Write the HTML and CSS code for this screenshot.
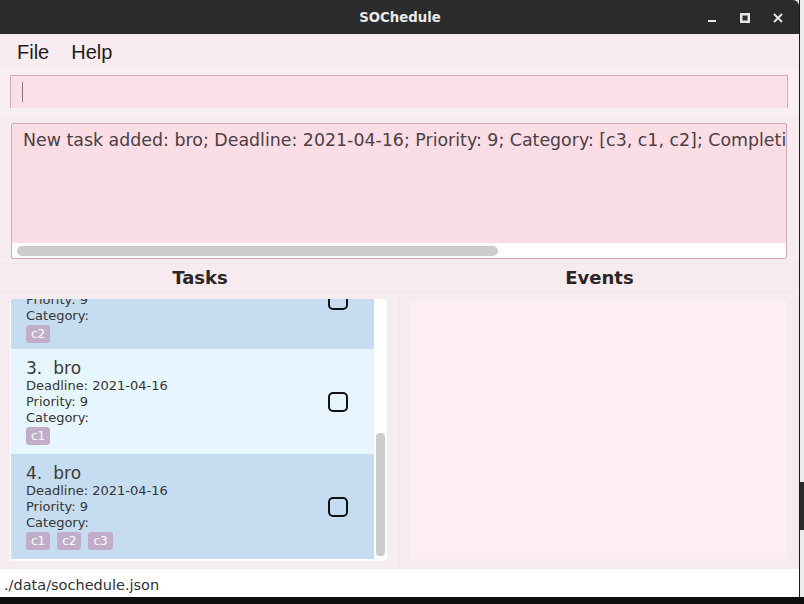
FILE: index.html
```html
<!DOCTYPE html>
<html>
<head>
<meta charset="utf-8">
<link rel="stylesheet" href="styles.css">
</head>
<body>
<div class="desk">
  <div class="window">
    <div class="titlebar">
      <div></div>
      <div class="title">SOChedule</div>
      <div class="winbtns">
        <svg width="12" height="12" viewBox="0 0 12 12"><rect x="2" y="8" width="8" height="2" fill="#e6e6e6"/></svg>
        <svg width="12" height="12" viewBox="0 0 12 12"><rect x="2.25" y="2.25" width="7.5" height="7.5" fill="none" stroke="#e6e6e6" stroke-width="2.5"/></svg>
        <svg width="12" height="12" viewBox="0 0 12 12"><path d="M2 2 L10 10 M10 2 L2 10" stroke="#e6e6e6" stroke-width="2"/></svg>
      </div>
    </div>
    <div class="menubar">
      <span>File</span>
      <span>Help</span>
    </div>
    <div class="cmd-area">
      <div class="cmd"><span class="caret"></span></div>
    </div>
    <div class="result-area">
      <div class="result">
        <div class="result-text">New task added: bro; Deadline: 2021-04-16; Priority: 9; Category: [c3, c1, c2]; Completion Status: Incomplete</div>
        <div class="hscroll"><div class="hthumb"></div></div>
      </div>
    </div>
    <div class="headers">
      <div class="hdr">Tasks</div>
      <div class="hdr">Events</div>
    </div>
    <div class="lists">
      <div class="col col-left">
        <div class="tasklist">
          <div class="cards">
            <div class="cards-inner">
              <div class="card dark first">
                <div class="info">
                  <div class="name"><span>2.</span><span class="nm">bro</span></div>
                  <div class="line">Deadline: 2021-04-16</div>
                  <div class="line">Priority: 9</div>
                  <div class="line">Category:</div>
                  <div class="tags"><span class="tag">c2</span></div>
                </div>
                <div class="check"></div>
              </div>
              <div class="card light">
                <div class="info">
                  <div class="name"><span>3.</span><span class="nm">bro</span></div>
                  <div class="line">Deadline: 2021-04-16</div>
                  <div class="line">Priority: 9</div>
                  <div class="line">Category:</div>
                  <div class="tags"><span class="tag">c1</span></div>
                </div>
                <div class="check"></div>
              </div>
              <div class="card dark">
                <div class="info">
                  <div class="name"><span>4.</span><span class="nm">bro</span></div>
                  <div class="line">Deadline: 2021-04-16</div>
                  <div class="line">Priority: 9</div>
                  <div class="line">Category:</div>
                  <div class="tags"><span class="tag">c1</span><span class="tag">c2</span><span class="tag">c3</span></div>
                </div>
                <div class="check"></div>
              </div>
            </div>
          </div>
          <div class="vscroll"><div class="vthumb"></div></div>
        </div>
      </div>
      <div class="col col-right">
        <div class="eventlist"></div>
      </div>
    </div>
    <div class="status">./data/sochedule.json</div>
  </div>
  <div class="taskbar"></div>
</div>
</body>
</html>
```
FILE: styles.css
```css
html, body {
  margin: 0;
  padding: 0;
}
body {
  width: 804px;
  height: 604px;
  overflow: hidden;
  background: linear-gradient(to bottom, #ececec 0, #ececec 482px, #2a2a2a 482px, #2a2a2a 530px, #ececec 530px);
  font-family: "DejaVu Sans", sans-serif;
}
.desk {
  display: flex;
  flex-direction: column;
  width: 804px;
  height: 604px;
}
.window {
  width: 799px;
  height: 597px;
  background: #f7ecf0;
  border-right: 1px solid #1c1c1c;
  display: flex;
  flex-direction: column;
}
.taskbar {
  height: 7px;
  background: #0e0e0e;
}
.titlebar {
  height: 34px;
  flex: none;
  background: #2b2b2b;
  display: grid;
  grid-template-columns: 1fr auto 1fr;
  align-items: center;
  border-top-right-radius: 6px;
}
.title {
  color: #e9e9e9;
  font-family: "DejaVu Sans", sans-serif;
  font-weight: bold;
  font-size: 13.3px;
  padding-left: 1px;
}
.winbtns {
  display: flex;
  justify-content: flex-end;
  gap: 21px;
  padding-right: 15px;
  padding-top: 1px;
}
.winbtns svg {
  display: block;
}
.menubar {
  height: 34px;
  box-sizing: border-box;
  padding-top: 3px;
  flex: none;
  background: #f9ecf0;
  display: flex;
  align-items: center;
  gap: 22px;
  padding-left: 17px;
  font-family: "Liberation Sans", sans-serif;
  font-size: 20px;
  color: #1e1e1e;
}
.cmd-area {
  padding: 7px 11px 7px 10px;
  background: #f9eef2;
  flex: none;
}
.cmd {
  height: 34px;
  box-sizing: border-box;
  background: #fcdee7;
  border: 1px solid #d4acb8;
  border-bottom-color: #fbf4f6;
  display: flex;
  align-items: center;
  padding-left: 11px;
}
.caret {
  width: 1px;
  height: 20px;
  background: #8a7a80;
}
.result-area {
  padding: 7px 12px 4px 11px;
  flex: none;
}
.result {
  height: 136px;
  box-sizing: border-box;
  background: #fbdde6;
  border: 1px solid #d3a9b5;
  border-radius: 2px;
  display: flex;
  flex-direction: column;
  overflow: hidden;
}
.result-text {
  flex: 1;
  padding: 6px 0 0 11px;
  font-size: 17.4px;
  line-height: 20px;
  color: #4a4044;
  white-space: nowrap;
  overflow: hidden;
}
.hscroll {
  height: 15px;
  background: #ffffff;
  display: flex;
  align-items: center;
  padding-left: 5px;
}
.hthumb {
  width: 481px;
  height: 10px;
  background: #cccccc;
  border-radius: 5px;
}
.headers {
  height: 28px;
  flex: none;
  display: grid;
  grid-template-columns: 400px 399px;
  background: #f8ebef;
  border-top: 1px solid #f5e6ea;
  box-sizing: border-box;
}
.hdr {
  display: flex;
  align-items: center;
  justify-content: center;
  font-weight: bold;
  font-size: 18px;
  color: #2c2426;
}
.lists {
  flex: 1;
  display: grid;
  grid-template-columns: 400px 399px;
  min-height: 0;
  border-top: 1px solid #f3e6ea;
}
.col {
  background: #f6ecef;
  display: flex;
  min-height: 0;
}
.col-left {
  padding: 7px 12px 8px 10px;
  border-right: 1px solid #f2e4e8;
}
.col-right {
  padding: 8px 12px 10px 10px;
}
.tasklist {
  flex: 1;
  background: #ffffff;
  display: flex;
  overflow: hidden;
}
.cards {
  width: 363px;
  margin-left: 1px;
  overflow: hidden;
}
.cards-inner {
  margin-top: -55px;
}
.card {
  height: 105px;
  box-sizing: border-box;
  display: flex;
  align-items: center;
  padding: 9px 26px 9px 15px;
  color: #353535;
}
.card.first {
  padding-top: 12px;
  padding-bottom: 6px;
}
.card.dark {
  background: #c6dcf0;
}
.card.light {
  background: #e7f5fe;
}
.info {
  flex: 1;
  align-self: flex-start;
}
.name {
  font-size: 17px;
  line-height: 20px;
  color: #3a3a3a;
}
.nm {
  margin-left: 11px;
}
.line {
  font-size: 13px;
  line-height: 16px;
}
.tags {
  display: flex;
  gap: 7px;
  margin-top: 1px;
}
.tag {
  height: 18px;
  line-height: 18px;
  padding: 0 5px;
  background: #c1adca;
  color: #ffffff;
  font-size: 12px;
  border-radius: 3px;
}
.check {
  width: 20px;
  height: 20px;
  box-sizing: border-box;
  border: 2px solid #111111;
  border-radius: 5px;
}
.vscroll {
  flex: 1;
  background: #ffffff;
  padding: 134px 2px 5px 2px;
  display: flex;
}
.vthumb {
  flex: 1;
  background: #cccccc;
  border-radius: 4px;
}
.eventlist {
  flex: 1;
  background: #fdeef2;
}
.status {
  height: 28px;
  box-sizing: border-box;
  padding-top: 3px;
  flex: none;
  background: #ffffff;
  display: flex;
  align-items: center;
  padding-left: 4px;
  font-size: 14.5px;
  color: #2f2f3c;
}
```
